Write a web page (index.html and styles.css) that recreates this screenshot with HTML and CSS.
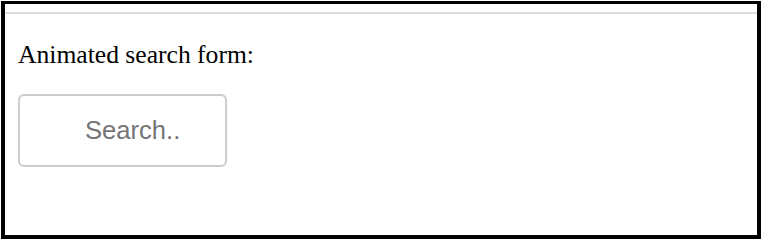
FILE: index.html
```html
<!DOCTYPE html>
<html>
<head>
<meta charset="utf-8">
<link rel="stylesheet" href="styles.css">
</head>
<body>
<div class="frame">
  <div class="topline"></div>
  <div class="content">
    <p class="label">Animated search form:</p>
    <form class="search-form">
      <input class="search-input" type="text" name="search" placeholder="Search..">
    </form>
  </div>
</div>
</body>
</html>
```

FILE: styles.css
```css
html, body {
  margin: 0;
  padding: 0;
  background: #ffffff;
}
body {
  padding: 1px 0 0 1px;
}
.frame {
  box-sizing: border-box;
  width: 760px;
  height: 238px;
  border: 4px solid #000000;
  border-top-width: 3px;
  background: #ffffff;
  overflow: hidden;
}
.topline {
  margin-top: 8px;
  height: 2px;
  background: #dcdcdc;
}
.content {
  padding: 0 13px;
}
.label {
  margin: 26px 0 24px 0;
  font-family: "Liberation Serif", "Times New Roman", serif;
  font-size: 25.6px;
  color: #000000;
}
.search-form {
  margin: 0;
}
.search-input {
  box-sizing: border-box;
  display: block;
  width: 209px;
  height: 73px;
  margin: 0;
  padding: 0 20px 0 65px;
  border: 2px solid #cccccc;
  border-radius: 6px;
  background: #ffffff;
  font-family: "Liberation Sans", Arial, sans-serif;
  font-size: 25.6px;
  color: #333333;
  outline: none;
}
.search-input::placeholder {
  color: #757575;
  opacity: 1;
}
```
